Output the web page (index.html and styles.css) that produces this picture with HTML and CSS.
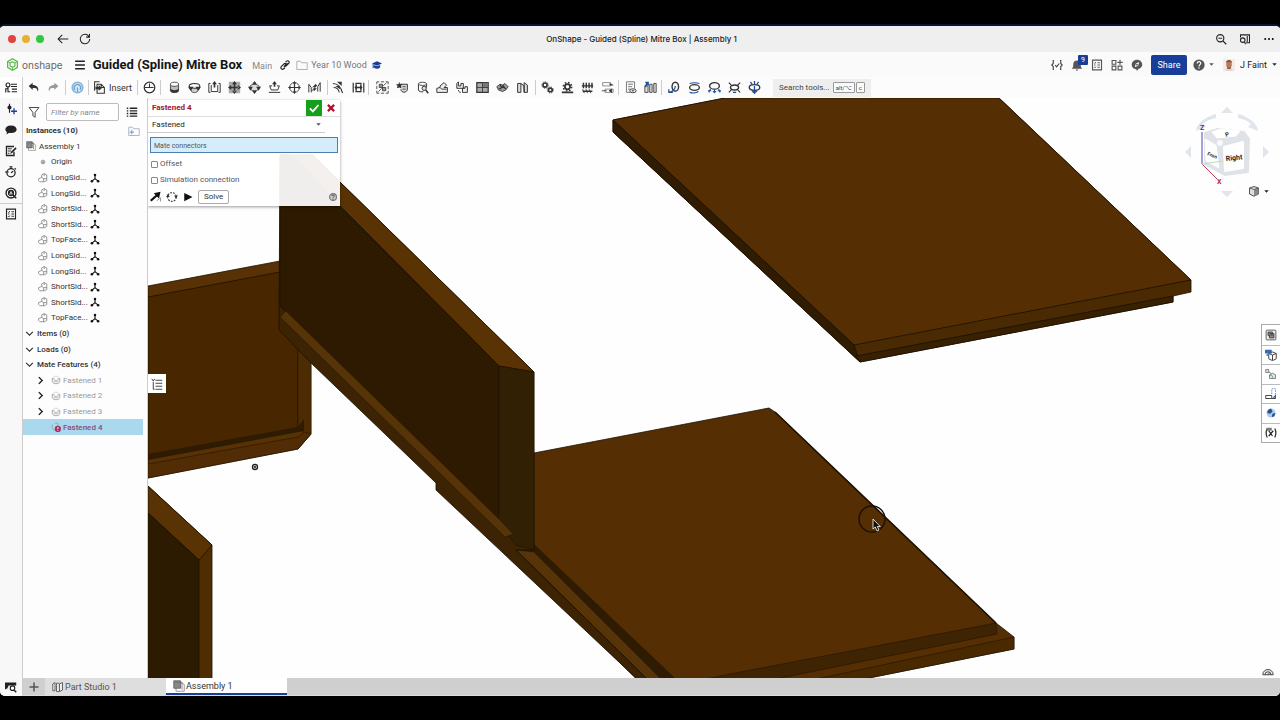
FILE: index.html
```html
<!DOCTYPE html>
<html lang="en">
<head>
<meta charset="utf-8">
<title>OnShape - Guided (Spline) Mitre Box | Assembly 1</title>
<link rel="stylesheet" href="styles.css">
</head>
<body>
<svg class="sprite" aria-hidden="true">
  <symbol id="i-tree" viewBox="0 0 16 16"><g fill="none" stroke="currentColor" stroke-width="1.500"><circle cx="4" cy="4" r="2.600"/><path d="M4 6.500V13h3M4 9H1v5M8 3h8M8 6h8M9 9.500h7M9 13h7"/></g></symbol>
  <symbol id="i-undo" viewBox="0 0 16 16"><path d="M2 6 7 2v3c5 0 7 3 7 6l-1 2c0-4-2-4.500-6-4.500V11z" fill="currentColor"/></symbol>
  <symbol id="i-redo" viewBox="0 0 16 16"><path d="M14 6 9 2v3C4 5 2 8 2 11l1 2c0-4 2-4.500 6-4.500V11z" fill="currentColor"/></symbol>
  <symbol id="i-sync" viewBox="0 0 16 16"><circle cx="8" cy="8" r="6.500" fill="#d6e8f6" stroke="#86b5db" stroke-width="2"/><path d="M5 11a4 4 0 1 1 6 0M8 8v6" fill="none" stroke="#6ba4d0" stroke-width="1.500"/></symbol>
  <symbol id="i-insert" viewBox="0 0 16 16"><g fill="none" stroke="currentColor" stroke-width="1.300"><path d="M5 4h5l4 4v7H5zM10 4v4h4M2 12V1h6"/></g><path d="M3 7h4V5l4 4-4 3v-2H3z" fill="currentColor"/></symbol>
  <symbol id="i-clock" viewBox="0 0 16 16"><circle cx="8" cy="8" r="6.500" fill="none" stroke="currentColor" stroke-width="1.500"/><path d="M8 3v5h5M2 8l6 0" fill="none" stroke="currentColor" stroke-width="1.300"/></symbol>
  <symbol id="i-cyl" viewBox="0 0 16 16"><path d="M3 4v8c0 3 10 3 10 0V4" fill="#bbb" stroke="currentColor"/><ellipse cx="8" cy="4" rx="5" ry="2.500" fill="#fff" stroke="currentColor"/><path d="M3 9c0 3 10 3 10 0v3c0 3-10 3-10 0z" fill="currentColor"/></symbol>
  <symbol id="i-revolve" viewBox="0 0 16 16"><path d="M4 8v4c0 3 8 3 8 0V8" fill="#ccc" stroke="currentColor"/><ellipse cx="8" cy="6" rx="6.500" ry="3" fill="#fff" stroke="currentColor" stroke-width="1.300"/><path d="M0 7h7L3 12zM16 7H9l4 5z" fill="currentColor"/></symbol>
  <symbol id="i-slider" viewBox="0 0 16 16"><path d="M4 5v8h8V5M3 3H1v11h2M13 3h2v11h-2" fill="none" stroke="currentColor" stroke-width="1.200"/><path d="M8 0l3 4H5zM7 4h2v4H7z" fill="currentColor"/></symbol>
  <symbol id="i-planar" viewBox="0 0 16 16"><path d="M1 1h14v14H1z" fill="#aaa"/><path d="M8 0l3 4H5zM8 16l3-4H5zM0 8l4-3v6zM16 8l-4-3v6zM7 3h2v10H7zM3 7h10v2H3z" fill="currentColor"/></symbol>
  <symbol id="i-cylmate" viewBox="0 0 16 16"><ellipse cx="8" cy="8" rx="6" ry="4" fill="#ddd" stroke="currentColor"/><path d="M8 0l3 4H5zM8 16l3-4H5zM0 7h6l-3 5zM16 7h-6l3 5z" fill="currentColor"/></symbol>
  <symbol id="i-pin" viewBox="0 0 16 16"><path d="M8 0l3 4H9v3H7V4H5z" fill="currentColor"/><path d="M5 6H2l2 5h8l2-5h-3M1 14h14" fill="none" stroke="currentColor" stroke-width="1.200"/></symbol>
  <symbol id="i-ball" viewBox="0 0 16 16"><circle cx="8" cy="8" r="6" fill="none" stroke="currentColor"/><path d="M8 1v14M1 8h14" stroke="currentColor" stroke-width="1.500"/><path d="M8 0l2 3H6zM8 16l2-3H6zM0 8l3-2v4zM16 8l-3-2v4z" fill="currentColor"/></symbol>
  <symbol id="i-parallel" viewBox="0 0 16 16"><path d="M1 14V4l3 4v6M15 13V2l-3 5v6M5 12l6-7" fill="none" stroke="currentColor" stroke-width="1.200"/><path d="M5 8l5-5v4zM11 9l-4 4V9z" fill="currentColor"/></symbol>
  <symbol id="i-tangent" viewBox="0 0 16 16"><path d="M1 3c6 0 10 4 12 12M2 8c4 0 6 2 7 6" fill="none" stroke="currentColor" stroke-width="1.300"/><path d="M6 1h6v5zM4 6h5l1 4z" fill="currentColor"/></symbol>
  <symbol id="i-width" viewBox="0 0 16 16"><path d="M1.500 2v12M14.500 2v12M5 3h6v10H5z" fill="none" stroke="currentColor" stroke-width="1.500"/><path d="M3 8l3-3v2h4V5l3 3-3 3V9H6v2z" fill="currentColor"/></symbol>
  <symbol id="i-group" viewBox="0 0 16 16"><path d="M1 4V1h3M12 1h3v3M15 12v3h-3M4 15H1v-3M6 1h4M6 15h4M1 6v4M15 6v4" fill="none" stroke="currentColor"/><path d="M4 4h4v4H4zM8 8h4v4H8z" fill="#999" stroke="currentColor"/><path d="M9 6l4-4M3 13l4-4" stroke="currentColor"/></symbol>
  <symbol id="i-rel" viewBox="0 0 16 16"><path d="M5 4h9v6c0 5-8 5-8 0" fill="#ddd" stroke="currentColor" stroke-width="1.200"/><path d="M8 7h4M8 10h4" stroke="currentColor"/><path d="M4 1l1 3 3 0-2 2 1 3-3-1-3 1 1-3-2-2h3z" fill="currentColor"/></symbol>
  <symbol id="i-search3d" viewBox="0 0 16 16"><path d="M3 3v8c0 2 4 3 6 2M13 3v5" fill="none" stroke="currentColor" stroke-width="1.200"/><ellipse cx="8" cy="3.500" rx="5" ry="2" fill="#fff" stroke="currentColor"/><circle cx="10" cy="9" r="2.600" fill="#ddd" stroke="currentColor" stroke-width="1.200"/><path d="M12 11l3 4" stroke="currentColor" stroke-width="2"/></symbol>
  <symbol id="i-pattern" viewBox="0 0 16 16"><path d="M1 13V9l4-1V6l5-4 3 3-3 3h4v6H1zM5 8l2 2h6" fill="#eee" stroke="currentColor" stroke-width="1.200"/></symbol>
  <symbol id="i-copy3d" viewBox="0 0 16 16"><path d="M1 9V3l2-2v5h3V3h3v6zM8 14V9h3V7h3v7z" fill="#eee" stroke="currentColor" stroke-width="1.200"/><path d="M3 11c0 2 1 3 3 3" fill="none" stroke="currentColor"/></symbol>
  <symbol id="i-quad" viewBox="0 0 16 16"><path d="M1 2h14v12H1z" fill="#aaa" stroke="currentColor" stroke-width="1.500"/><path d="M8 2h7v6H8z" fill="#777"/><path d="M1 8h14M8 2v12" stroke="currentColor"/></symbol>
  <symbol id="i-rep" viewBox="0 0 16 16"><path d="M1 7l4-3 3 1 3-2 4 4-3 4-4 2-5-2z" fill="#999" stroke="currentColor"/><path d="M5 4l2 5M8 5l4 5M4 10l6-4" stroke="currentColor" stroke-width="1.500"/></symbol>
  <symbol id="i-book" viewBox="0 0 16 16"><path d="M2 3h4v11H2zM10 2l4 3v9h-4zM6 3l4 3v8" fill="#ddd" stroke="currentColor" stroke-width="1.200"/></symbol>
  <symbol id="i-gears" viewBox="0 0 16 16"><g fill="none" stroke="currentColor"><circle cx="5" cy="5" r="2.500" stroke-width="2"/><circle cx="5" cy="5" r="4" stroke-dasharray="1.500 1.500"/><circle cx="11.500" cy="11" r="2.300" stroke-width="2"/><circle cx="11.500" cy="11" r="3.800" stroke-dasharray="1.500 1.500"/></g></symbol>
  <symbol id="i-gear" viewBox="0 0 16 16"><circle cx="8" cy="7" r="3.200" fill="none" stroke="currentColor" stroke-width="2.200"/><circle cx="8" cy="7" r="5.200" fill="none" stroke="currentColor" stroke-width="1.800" stroke-dasharray="2 2.080"/><path d="M1 14h14" stroke="currentColor" stroke-width="2"/></symbol>
  <symbol id="i-rack" viewBox="0 0 16 16"><path d="M1 6h14M3 2v7M6.500 2v7M10 2v7M13.500 2v7M2 12.500h12" stroke="currentColor" stroke-width="1.800"/><path d="M2 10l2 5M6 10l2 5M10 10l2 5" stroke="currentColor"/></symbol>
  <symbol id="i-linear" viewBox="0 0 16 16"><path d="M2 2h10v4H2zM5 10h10v4H5z" fill="#fff" stroke="#777"/><path d="M11 3v2h4M1 12h6M10 12l3-2v4z" stroke="currentColor" fill="currentColor"/></symbol>
  <symbol id="i-bom" viewBox="0 0 16 16"><path d="M3 1h10v8M3 1v13h5M5 4h6M5 7h5M5 10h3" fill="none" stroke="#777" stroke-width="1.200"/><ellipse cx="11" cy="12" rx="4" ry="2.500" fill="#ddd" stroke="currentColor"/><circle cx="11" cy="12" r="1" fill="currentColor"/></symbol>
  <symbol id="i-explode" viewBox="0 0 16 16"><path d="M1 6h4v8H1zM7 4h3v10H7zM12 3h3v11h-3z" fill="#ddd" stroke="currentColor"/><path d="M1 1h5v5L4.500 4.500 2 8 1 6l1.500-3z" fill="#1f4e9c"/></symbol>
  <symbol id="i-joint1" viewBox="0 0 16 16"><ellipse cx="9" cy="7" rx="4" ry="5.500" fill="none" stroke="currentColor" stroke-width="1.700"/><path d="M9 6c0 5-4 7-8 8M1 10v4h5" fill="none" stroke="#1f4e9c" stroke-width="1.500"/></symbol>
  <symbol id="i-joint2" viewBox="0 0 16 16"><ellipse cx="8" cy="8" rx="6" ry="3.500" fill="none" stroke="currentColor" stroke-width="1.700"/><path d="M2 3c4-1 8-1 12 0M2 14c4 1 8 1 11-1" fill="none" stroke="#1f4e9c" stroke-width="1.300"/></symbol>
  <symbol id="i-joint3" viewBox="0 0 16 16"><ellipse cx="8" cy="6" rx="6" ry="4" fill="none" stroke="currentColor" stroke-width="1.700"/><path d="M3 10l-2 4M8 10v5M13 10l2 4M0 12h4M12 12h4M6 13h4" stroke="#1f4e9c" stroke-width="1.400"/></symbol>
  <symbol id="i-joint4" viewBox="0 0 16 16"><ellipse cx="8" cy="8" rx="5" ry="3" fill="none" stroke="currentColor" stroke-width="1.700"/><path d="M1 2l4 4M15 2l-4 4M1 14l4-4M15 14l-4-4" stroke="currentColor" stroke-width="1.500"/><path d="M6 14h4" stroke="#1f4e9c" stroke-width="1.500"/></symbol>
  <symbol id="i-joint5" viewBox="0 0 16 16"><ellipse cx="8" cy="8" rx="6.500" ry="3.500" fill="none" stroke="currentColor" stroke-width="1.600"/><path d="M8 6v9M5 12l3 3 3-3M8 0v4M3 1l2 3M13 1l-2 3" fill="none" stroke="#1f4e9c" stroke-width="1.600"/></symbol>

  <symbol id="i-addslider" viewBox="0 0 16 16"><path d="M6 1v12" stroke="currentColor" stroke-width="1.500"/><circle cx="6" cy="6" r="2.700" fill="currentColor"/><path d="M12 7v8M8 11h8" stroke="#1a3f9c" stroke-width="1.800"/></symbol>
  <symbol id="i-chat" viewBox="0 0 16 16"><path d="M8 2c5 0 7.500 2.500 7.500 5.200S13 12 8 12c-1 0-2-.1-2.600-.3L2 14l.6-3.500C1 9.500.5 8.500.5 7.200.5 4.500 3 2 8 2z" fill="currentColor"/></symbol>
  <symbol id="i-note" viewBox="0 0 16 16"><path d="M12 9v5H2V2h10" fill="none" stroke="currentColor" stroke-width="1.800"/><path d="M4 5h5M4 8h4M4 11h2" stroke="currentColor" stroke-width="1.200"/><path d="M7 12l1-3 6-6 1.500 1.500-6 6z" fill="currentColor"/></symbol>
  <symbol id="i-watch" viewBox="0 0 16 16"><circle cx="8" cy="9" r="5.500" fill="none" stroke="currentColor" stroke-width="1.700"/><path d="M6 1h4M8 1v3M13 3l1.500 1.500M8 9l3-2M0 8h5" stroke="currentColor" stroke-width="1.600"/></symbol>
  <symbol id="i-q" viewBox="0 0 16 16"><circle cx="8" cy="8" r="6.600" fill="#fff" stroke="currentColor" stroke-width="1.800"/><circle cx="8" cy="8" r="4.200" fill="currentColor"/><path d="M8 5l2.500 5h-5z" fill="#fff"/><path d="M8 7.500v3" stroke="currentColor"/><path d="M10 10l5 5" stroke="currentColor" stroke-width="2"/></symbol>
  <symbol id="i-check" viewBox="0 0 16 16"><path d="M2 1.500h12v13H2z" fill="none" stroke="currentColor" stroke-width="1.500"/><path d="M4 5l1 1 1.500-2M4 11l1 1 1.500-2M8.500 5H12M8.500 8H12M8.500 11H12M4 8h2" fill="none" stroke="currentColor" stroke-width="1.200"/></symbol>
  <symbol id="i-tabsearch" viewBox="0 0 16 16"><path d="M1 11V3h13v3" fill="none" stroke="currentColor" stroke-width="2"/><path d="M1 3h13v3H1zM1 6h4l-2 4H1z" fill="currentColor"/><circle cx="10" cy="9.500" r="3" fill="#fff" stroke="currentColor" stroke-width="1.500"/><path d="M12 12l3 3" stroke="currentColor" stroke-width="2"/></symbol>

  <symbol id="i-part" viewBox="0 0 16 16"><path d="M1 9l5-2V3l4-2 4 2v9l-4 2H3l-2-2zM6 7l3 2h5M9 9v5M10 1v4" fill="#fff" stroke="#777" stroke-width="1.200"/></symbol>
  <symbol id="i-mate" viewBox="0 0 16 16"><path d="M8 2v7L3 13M8 9l5 4" fill="none" stroke="#111" stroke-width="1.800"/><circle cx="8" cy="3" r="2" fill="#111"/><circle cx="3" cy="13" r="2" fill="#111"/><circle cx="13" cy="13" r="2" fill="#111"/></symbol>
  <symbol id="i-assembly" viewBox="0 0 16 16"><path d="M4 4h8l3 2v9H4z" fill="#fff" stroke="#777"/><path d="M1 1h9v10H1z" fill="#888" stroke="#555"/><path d="M3 3h9v10" fill="none" stroke="#666"/></symbol>
  <symbol id="i-fasten" viewBox="0 0 16 16"><path d="M2 5v6c2 4 10 4 12 0V5l-4 2v3H6V7z" fill="#eee" stroke="#999" stroke-width="1.200"/><path d="M5 2h6v6H5z" fill="#fff" stroke="#ccc"/></symbol>
  <symbol id="i-down" viewBox="0 0 16 16"><path d="M2 5l6 6 6-6" fill="none" stroke="currentColor" stroke-width="2"/></symbol>
  <symbol id="i-right" viewBox="0 0 16 16"><path d="M5 2l6 6-6 6" fill="none" stroke="currentColor" stroke-width="2.500"/></symbol>
  <symbol id="i-folder" viewBox="0 0 16 16"><path d="M1 3h5l1.500 2H15v9H1z" fill="none" stroke="#aaa" stroke-width="1.200"/></symbol>
  <symbol id="i-caret" viewBox="0 0 16 16"><path d="M1 4h14l-7 8z" fill="currentColor"/></symbol>
</svg>

<div class="window">
  <header class="titlebar">
    <div class="title-nav">
      <div class="lights"><i class="light light--red"></i><i class="light light--amber"></i><i class="light light--green"></i></div>
      <button class="icon-btn" aria-label="Back"><svg class="ic" viewBox="0 0 16 16"><path d="M15 8H2M7 2.500L1.500 8 7 13.500" fill="none" stroke="#222" stroke-width="1.400"/></svg></button>
      <button class="icon-btn" aria-label="Reload"><svg class="ic" viewBox="0 0 16 16"><path d="M13.500 5A6.300 6.300 0 1 0 14.300 8M14 1v4.500H9.500" fill="none" stroke="#222" stroke-width="1.400"/></svg></button>
    </div>
    <div class="window-title">OnShape - Guided (Spline) Mitre Box | Assembly 1</div>
    <div class="title-actions">
      <button class="icon-btn" aria-label="Zoom out"><svg class="ic" viewBox="0 0 16 16"><circle cx="7" cy="7" r="4.800" fill="none" stroke="#222" stroke-width="1.500"/><path d="M10.500 10.500L15 15M4.500 7h5" stroke="#222" stroke-width="1.600"/></svg></button>
      <button class="icon-btn" aria-label="Search page"><svg class="ic" viewBox="0 0 16 16"><path d="M2 6V2.500h12V13H9M11 4v8" fill="none" stroke="#222" stroke-width="1.400"/><circle cx="5" cy="9.500" r="3" fill="none" stroke="#222" stroke-width="1.400"/><path d="M7 12l2 3" stroke="#222" stroke-width="1.400"/></svg></button>
      <button class="icon-btn" aria-label="More"><svg class="ic" viewBox="0 0 16 16"><circle cx="3" cy="8" r="1.300"/><circle cx="8" cy="8" r="1.300"/><circle cx="13" cy="8" r="1.300"/></svg></button>
    </div>
  </header>

  <div class="docbar">
    <a class="brand" href="#"><svg class="brand-mark" viewBox="0 0 16 16"><path d="M8 1l6 3.500v7L8 15l-6-3.500v-7z" fill="none" stroke="#58b947" stroke-width="1.600"/><path d="M8 4.500l3 1.700v3.600l-3 1.700-3-1.700V6.200z" fill="none" stroke="#58b947" stroke-width="1.400"/><path d="M11 6l3-1.500M8 11.500V15M5 6L2 4.500" stroke="#58b947"/></svg><span>onshape</span></a>
    <button class="icon-btn menu-btn" aria-label="Menu"><svg class="ic" viewBox="0 0 16 16"><path d="M1.500 3h13M1.500 8h13M1.500 13h13" stroke="#222" stroke-width="2.200"/></svg></button>
    <h1 class="doc-title">Guided (Spline) Mitre Box</h1>
    <span class="branch">Main</span>
    <svg class="ic-sm link-ic" viewBox="0 0 16 16"><path d="M7 10l5-5M9 3.500l2-2c2-1 5 1 3 4l-4 4c-1 1-3 1-4 0M8 12l-2 2c-2 2-6 0-4-3.500l4-4c1-1 3-1 4 0" fill="none" stroke="#222" stroke-width="1.800"/></svg>
    <a class="folder-link" href="#"><svg class="ic"><use href="#i-folder"/></svg><span>Year 10 Wood</span></a>
    <svg class="ic-sm" viewBox="0 0 16 16"><path d="M8 2l8 3.500L8 9 0 5.500z" fill="#173f98"/><path d="M3 8l5 2 5-2v4c-3 2.500-7 2.500-10 0zM1 6h1.500v7H1z" fill="#173f98"/></svg>
    <div class="doc-actions">
      <button class="act" aria-label="Variables"><svg class="ic" viewBox="0 0 16 16"><path d="M4 2H3v4L1 8l2 2v4h1M12 2h1v4l2 2-2 2v4h-1M5.500 8l2 2.500L11 6" fill="none" stroke="#444" stroke-width="1.500"/></svg></button>
      <button class="act act--bell" aria-label="Notifications"><svg class="ic" viewBox="0 0 16 16"><path d="M1 13c2-2 2-3 2-6 0-3 2-5 5-5s5 2 5 5c0 3 0 4 2 6zM6 14h4l-2 2z" fill="#555"/></svg><span class="badge">9</span></button>
      <button class="act" aria-label="Tasks"><svg class="ic"><use href="#i-check"/></svg></button>
      <button class="act" aria-label="Apps"><svg class="ic" viewBox="0 0 16 16"><path d="M1.500 2h5v5h-5zM1.500 9.500h5v5h-5zM9.500 9.500h5v5h-5zM12 1v7M8.500 4.500h7" fill="none" stroke="#555" stroke-width="1.500"/></svg></button>
      <button class="act" aria-label="AI advisor"><svg class="ic" viewBox="0 0 16 16"><path d="M8 1c4 0 7 3 7 6.500 0 3-3 5-5 5.500l-2 3-1-2.500C3 13 1 11 1 7.500 1 4 4 1 8 1z" fill="#555"/><path d="M11 4L9.500 9 5 11l1.500-5z" fill="#fff"/><circle cx="8" cy="7.500" r="1.200" fill="#555"/></svg></button>
      <button class="share">Share</button>
      <button class="act act--help" aria-label="Help"><svg class="ic" viewBox="0 0 16 16"><circle cx="8" cy="8" r="7.500" fill="#555"/><path d="M5.700 6c0-3.500 5-3 4.600 0C10 7.500 8 8 8 10" fill="none" stroke="#fff" stroke-width="1.600"/><circle cx="8" cy="12" r="1" fill="#fff"/></svg><svg class="caret"><use href="#i-caret"/></svg></button>
      <button class="user"><svg class="avatar" viewBox="0 0 16 16"><rect width="16" height="16" fill="#f3ebe6"/><path d="M3 16c0-4 2-5 5-5s5 1 5 5z" fill="#e7d5cf"/><ellipse cx="8" cy="7" rx="3.700" ry="5" fill="#b9785a"/><path d="M4 5c0-5 8-5 8 0-2-2-6-2-8 0z" fill="#7a4c36"/><path d="M5 9c1 4 5 4 6 0l-1 4H6z" fill="#4c2d22"/></svg><span>J Faint</span><svg class="caret"><use href="#i-caret"/></svg></button>
    </div>
  </div>

  <div class="workspace">
    <nav class="rail">
      <button class="rail-btn rail-btn--top" aria-label="Feature list"><svg class="ic"><use href="#i-tree"/></svg></button>
      <button class="rail-btn" aria-label="Configurations"><svg class="ic"><use href="#i-addslider"/></svg></button>
      <button class="rail-btn" aria-label="Comments"><svg class="ic"><use href="#i-chat"/></svg></button>
      <button class="rail-btn" aria-label="Notes"><svg class="ic"><use href="#i-note"/></svg></button>
      <button class="rail-btn" aria-label="History"><svg class="ic"><use href="#i-watch"/></svg></button>
      <button class="rail-btn" aria-label="Learning"><svg class="ic"><use href="#i-q"/></svg></button>
      <button class="rail-btn rail-btn--split" aria-label="Checklist"><svg class="ic"><use href="#i-check"/></svg></button>
      <button class="rail-btn rail-btn--bottom" aria-label="Tab manager"><svg class="ic"><use href="#i-tabsearch"/></svg></button>
    </nav>

    <div class="content">
      <div class="toolbar">
        <div class="tools tools--first"><button class="tool" aria-label="Undo"><svg><use href="#i-undo"/></svg></button><button class="tool tool--off" aria-label="Redo"><svg><use href="#i-redo"/></svg></button></div>
        <div class="tools"><button class="tool" aria-label="Update"><svg><use href="#i-sync"/></svg></button></div>
        <div class="tools"><button class="tool tool--text"><svg><use href="#i-insert"/></svg><span>Insert</span></button></div>
        <div class="tools"><button class="tool" aria-label="Named positions"><svg><use href="#i-clock"/></svg></button></div>
        <div class="tools tools--wide">
          <button class="tool" aria-label="Fastened mate"><svg><use href="#i-cyl"/></svg></button>
          <button class="tool" aria-label="Revolute mate"><svg><use href="#i-revolve"/></svg></button>
          <button class="tool" aria-label="Slider mate"><svg><use href="#i-slider"/></svg></button>
          <button class="tool" aria-label="Planar mate"><svg><use href="#i-planar"/></svg></button>
          <button class="tool" aria-label="Cylindrical mate"><svg><use href="#i-cylmate"/></svg></button>
          <button class="tool" aria-label="Pin slot mate"><svg><use href="#i-pin"/></svg></button>
          <button class="tool" aria-label="Ball mate"><svg><use href="#i-ball"/></svg></button>
          <button class="tool" aria-label="Parallel mate"><svg><use href="#i-parallel"/></svg></button>
        </div>
        <div class="tools tools--tight"><button class="tool" aria-label="Tangent mate"><svg><use href="#i-tangent"/></svg></button><button class="tool" aria-label="Width mate"><svg><use href="#i-width"/></svg></button></div>
        <div class="tools tools--wide">
          <button class="tool" aria-label="Group"><svg><use href="#i-group"/></svg></button>
          <button class="tool" aria-label="Mate connector"><svg><use href="#i-rel"/></svg></button>
          <button class="tool" aria-label="Snap mode"><svg><use href="#i-search3d"/></svg></button>
          <button class="tool" aria-label="Replicate"><svg><use href="#i-pattern"/></svg></button>
          <button class="tool" aria-label="Copy"><svg><use href="#i-copy3d"/></svg></button>
          <button class="tool" aria-label="Linear pattern"><svg><use href="#i-quad"/></svg></button>
          <button class="tool" aria-label="Circular pattern"><svg><use href="#i-rep"/></svg></button>
          <button class="tool" aria-label="Standard content"><svg><use href="#i-book"/></svg></button>
        </div>
        <div class="tools"><button class="tool" aria-label="Gear relation"><svg><use href="#i-gears"/></svg></button><button class="tool" aria-label="Rack relation"><svg><use href="#i-gear"/></svg></button><button class="tool" aria-label="Screw relation"><svg><use href="#i-rack"/></svg></button><button class="tool" aria-label="Linear relation"><svg><use href="#i-linear"/></svg></button></div>
        <div class="tools"><button class="tool" aria-label="Display states"><svg><use href="#i-bom"/></svg></button><button class="tool" aria-label="Exploded view"><svg><use href="#i-explode"/></svg></button></div>
        <div class="tools tools--last"><button class="tool" aria-label="Force"><svg><use href="#i-joint1"/></svg></button><button class="tool" aria-label="Moment"><svg><use href="#i-joint2"/></svg></button><button class="tool" aria-label="Pressure"><svg><use href="#i-joint3"/></svg></button><button class="tool" aria-label="Fixed"><svg><use href="#i-joint4"/></svg></button><button class="tool" aria-label="Bearing load"><svg><use href="#i-joint5"/></svg></button></div>
        <button class="tool-search"><span>Search tools...</span><span class="keys"><kbd>alt/⌥</kbd><kbd>c</kbd></span></button>
      </div>

      <main class="main">
        <aside class="sidebar">
          <div class="filter">
            <svg class="ic filter-ic" viewBox="0 0 16 16"><path d="M1.500 2h13L9.500 8.500V15l-3-2V8.500z" fill="none" stroke="#444" stroke-width="1.300"/></svg>
            <input class="filter-input" type="text" placeholder="Filter by name" aria-label="Filter by name">
            <button class="icon-btn filter-list" aria-label="List options"><svg class="ic" viewBox="0 0 16 16"><path d="M5 3h10M5 6.500h10M5 10h10M5 13.500h10M1 3h2M1 6.500h2M1 10h2M1 13.500h2" stroke="#222" stroke-width="1.800"/></svg></button>
          </div>
          <ul class="tree">
            <li class="row row--head"><span>Instances (10)</span><svg class="ic new-folder" viewBox="0 0 16 16"><path d="M1 3h5l1.500 2H15v9H1z" fill="none" stroke="#9fb0c4" stroke-width="1.200"/><path d="M5 6.500v6M2 9.500h6" stroke="#6b8fc0" stroke-width="1.200"/></svg></li>
            <li class="row row--root"><svg class="ic-sm"><use href="#i-assembly"/></svg><span>Assembly 1</span></li>
            <li class="row row--part"><svg class="ic-sm" viewBox="0 0 16 16"><circle cx="8" cy="8" r="3" fill="#ccc" stroke="#777"/><circle cx="8" cy="8" r="1" fill="#555"/></svg><span>Origin</span></li>
            <li class="row row--part"><svg class="ic-sm"><use href="#i-part"/></svg><span class="name">LongSid...</span><svg class="ic-sm"><use href="#i-mate"/></svg></li>
            <li class="row row--part"><svg class="ic-sm"><use href="#i-part"/></svg><span class="name">LongSid...</span><svg class="ic-sm"><use href="#i-mate"/></svg></li>
            <li class="row row--part"><svg class="ic-sm"><use href="#i-part"/></svg><span class="name">ShortSid...</span><svg class="ic-sm"><use href="#i-mate"/></svg></li>
            <li class="row row--part"><svg class="ic-sm"><use href="#i-part"/></svg><span class="name">ShortSid...</span><svg class="ic-sm"><use href="#i-mate"/></svg></li>
            <li class="row row--part"><svg class="ic-sm"><use href="#i-part"/></svg><span class="name">TopFace...</span><svg class="ic-sm"><use href="#i-mate"/></svg></li>
            <li class="row row--part"><svg class="ic-sm"><use href="#i-part"/></svg><span class="name">LongSid...</span><svg class="ic-sm"><use href="#i-mate"/></svg></li>
            <li class="row row--part"><svg class="ic-sm"><use href="#i-part"/></svg><span class="name">LongSid...</span><svg class="ic-sm"><use href="#i-mate"/></svg></li>
            <li class="row row--part"><svg class="ic-sm"><use href="#i-part"/></svg><span class="name">ShortSid...</span><svg class="ic-sm"><use href="#i-mate"/></svg></li>
            <li class="row row--part"><svg class="ic-sm"><use href="#i-part"/></svg><span class="name">ShortSid...</span><svg class="ic-sm"><use href="#i-mate"/></svg></li>
            <li class="row row--part"><svg class="ic-sm"><use href="#i-part"/></svg><span class="name">TopFace...</span><svg class="ic-sm"><use href="#i-mate"/></svg></li>
            <li class="row row--group"><svg class="chev"><use href="#i-down"/></svg><span>Items (0)</span></li>
            <li class="row row--group"><svg class="chev"><use href="#i-down"/></svg><span>Loads (0)</span></li>
            <li class="row row--group"><svg class="chev"><use href="#i-down"/></svg><span>Mate Features (4)</span></li>
            <li class="row row--mate"><svg class="chev"><use href="#i-right"/></svg><svg class="ic-sm"><use href="#i-fasten"/></svg><span>Fastened 1</span></li>
            <li class="row row--mate"><svg class="chev"><use href="#i-right"/></svg><svg class="ic-sm"><use href="#i-fasten"/></svg><span>Fastened 2</span></li>
            <li class="row row--mate"><svg class="chev"><use href="#i-right"/></svg><svg class="ic-sm"><use href="#i-fasten"/></svg><span>Fastened 3</span></li>
            <li class="row row--mate row--active"><span class="chev"></span><svg class="ic-sm" viewBox="0 0 16 16"><path d="M2 4v6c1 2 3 3 6 3M6 2h5v5" fill="none" stroke="#7fa3b8" stroke-width="1.200"/><circle cx="11" cy="11" r="5" fill="#a83265"/><path d="M11 8v3.500M11 13v1" stroke="#fff" stroke-width="1.500"/></svg><span>Fastened 4</span></li>
          </ul>
        </aside>

        <section class="viewport">
          <svg class="scene" viewBox="147 98 1133 580" preserveAspectRatio="xMinYMin slice" role="img" aria-label="Mitre box assembly">
            <g stroke="#1c1000" stroke-width=".8" stroke-linejoin="round">
              <path d="M612 120L724 98H998L1190 280V292L1172 296V302L859 362L612 132Z" fill="#4a2a03"/>
              <path d="M612 120L724 98H998L1190 280L853 345Z" fill="#552f03"/>
              <path d="M612 120L853 345L859 362L612 132Z" fill="#301c02"/>
              <path d="M855 356L1172 296V302L859 362Z" fill="#382003"/>

              <path d="M147 286L279 261L310 300V434L297 449L147 478Z" fill="#583205"/>
              <path d="M147 297L279 272L297 300V430L147 457Z" fill="#482700"/>
              <path d="M297 340H310V434L297 449L303 432L297 428Z" fill="#4d2c04" stroke-width=".4"/>
              <path d="M147 454L297 427L303 419V431L147 460Z" fill="#2e1b02" stroke="none"/>
              <path d="M147 464L297 437L303 432L310 434L297 449L147 478Z" fill="#512c04" stroke-width=".5"/>

              <path d="M147 486L211 545V679H147Z" fill="#4f2d03"/>
              <path d="M147 486L211 545L198 560L147 513Z" fill="#5a3304"/>
              <path d="M147 513L198 560V679H147Z" fill="#2c1b00"/>

              <path d="M533 453L768 408L774 412L995 623L1013 637V649L863 679H637L520 550Z" fill="#552f03"/>
              <path d="M724 675L995 623L996 634L775 679H705Z" fill="#3e2403" stroke-width=".5"/>
              <path d="M815 679L1013 637V649L863 679Z" fill="#482900" stroke-width=".5"/>
              <path d="M774 412L995 623" fill="none" stroke-width="1.600"/>
              <path d="M533 544L675 679H635L500 545Z" fill="#2e1b02" stroke="none"/>
              <path d="M515 550L533 552L660 679H646Z" fill="#573407" stroke-width=".4"/>

              <path d="M279 155H312L340 183L533 372V550L515 550L646 679H636L435 490V483L310 363L278 330Z" fill="#3b2304"/>
              <path d="M279 155H312L340 183L533 372L498 366L340 207L292 155Z" fill="#5a3304"/>
              <path d="M279 155H292L340 207L498 366V520L505 530L279 306Z" fill="#2d1a01"/>
              <path d="M498 366L533 372V550L515 545L498 525Z" fill="#312003" stroke-width=".5"/>
              <path d="M279 317L285 311L500 521L512 534L504 537Z" fill="#563407" stroke-width=".4"/>
            </g>
            <circle cx="254" cy="467" r="2.600" fill="#bbb" stroke="#222" stroke-width="1.200"/><circle cx="254" cy="467" r="1" fill="#222"/>
            <circle cx="871" cy="519" r="13" fill="none" stroke="#1b1008" stroke-width="1.400"/>
            <path d="M872 519v10l2.300-2 1.700 4 2-1-1.700-3.500h3z" fill="#111" stroke="#fff" stroke-width=".8"/>
          </svg>

          <form class="dialog">
            <div class="dialog-head"><h2>Fastened 4</h2><button type="button" class="ok" aria-label="Accept"><svg class="ic" viewBox="0 0 16 16"><path d="M2.500 8.500L6.500 12.500 14 4" fill="none" stroke="#fff" stroke-width="2.400"/></svg></button><button type="button" class="cancel" aria-label="Cancel"><svg class="ic-sm" viewBox="0 0 16 16"><path d="M3 3l10 10M13 3L3 13" stroke="#b0102c" stroke-width="3.500"/></svg></button></div>
            <div class="type"><select aria-label="Mate type"><option>Fastened</option></select><svg class="caret"><use href="#i-caret"/></svg></div>
            <input class="mates" type="text" placeholder="Mate connectors" aria-label="Mate connectors">
            <label class="check"><input type="checkbox"><span>Offset</span></label>
            <label class="check"><input type="checkbox"><span>Simulation connection</span></label>
            <div class="dialog-foot">
              <button type="button" class="icon-btn" aria-label="Flip axis"><svg class="ic" viewBox="0 0 16 16"><path d="M14 1L12 10 5 3z" fill="#111"/><path d="M1 13l9-8" stroke="#111" stroke-width="3"/><path d="M9 13l5-4v5" fill="none" stroke="#777"/></svg></button>
              <button type="button" class="icon-btn" aria-label="Rotate"><svg class="ic" viewBox="0 0 16 16"><circle cx="8" cy="8" r="5.800" fill="none" stroke="#444" stroke-width="1.500" stroke-dasharray="2.500 1.500"/><path d="M0 8h5L2.500 4zM11 6h5l-3 4z" fill="#333"/></svg></button>
              <button type="button" class="icon-btn" aria-label="Play"><svg class="ic" viewBox="0 0 16 16"><path d="M3 2.500L14 8 3 13.500z" fill="#111"/></svg></button>
              <button type="button" class="solve">Solve</button>
              <svg class="ic-sm info" viewBox="0 0 16 16"><circle cx="8" cy="8" r="5.500" fill="#ccc" stroke="#777" stroke-width="1.800"/><path d="M6 6.500c0-2.500 4-2.500 4 0C10 8 8 8 8 10M8 11v1.500" fill="none" stroke="#444" stroke-width="1.500"/></svg>
            </div>
          </form>

          <button class="list-toggle" aria-label="Toggle list"><svg class="ic" viewBox="0 0 16 16"><path d="M6 3h9M6 7h9M6 11h9M6 15h9M3 5v10h2M1 1l2 3 2-3" fill="none" stroke="#333" stroke-width="1.200"/></svg></button>

          <div class="viewcube">
            <svg class="cube" viewBox="0 0 88 96" role="img" aria-label="View cube">
              <g fill="#dfe5ea"><path d="M38 9h12l-6-6zM38 87h12l-6 6zM8 42v12l-6-6zM80 42v12l6-6z"/><path d="M14 23C18 16 25 12 33 10v4C27 15 23 17 20 20l3 3-10 4zM74 23C70 16 63 12 55 10v4c6 1 10 3 13 6l-3 3 10 4z"/></g>
              <path d="M22 29L35 25 61 28 66 35 65 68 42 71 22 60Z" fill="#dfe3e8" stroke="#dfe3e8" stroke-width="2" stroke-linejoin="round"/>
              <path d="M29 28L38 25 57 27 53 32 34 34Z" fill="#fff" stroke="#fff" stroke-linejoin="round"/>
              <path d="M22 35L33 41 36 64 23 57Z" fill="#fcfdfe" stroke="#fcfdfe" stroke-linejoin="round"/>
              <path d="M41 43L60 38V64L42 67Z" fill="#fff" stroke="#fff" stroke-width="2" stroke-linejoin="round"/>
              <circle cx="37" cy="39" r="3" fill="#f7f8fa"/>
              <path d="M19 28V60" stroke="#5543b4"/><path d="M19 60L34 75" stroke="#c0415c"/><path d="M19 60L40 57" stroke="#b9e0b5"/>
              <text x="17" y="26" font-size="7" font-weight="700" fill="#3b2fb0">Z</text>
              <text x="34" y="80" font-size="7" font-weight="700" fill="#c01838">X</text>
              <text x="43" y="57" font-size="7" font-weight="700" fill="#222" transform="rotate(-6 43 57)">Right</text>
              <text x="24" y="51" font-size="5" font-weight="700" fill="#333" transform="rotate(22 24 51)">Fron</text>
              <text x="43" y="33" font-size="6" font-weight="700" fill="#333" transform="rotate(-20 43 33)">P</text>
            </svg>
            <button class="shade" aria-label="Shading"><svg class="ic" viewBox="0 0 16 16"><path d="M2 4l6-2 6 2v8l-6 3-6-3z" fill="#ddd" stroke="#444" stroke-width="1.200"/><path d="M8 6l6-2v8l-6 3z" fill="#888"/><path d="M2 4l6 2 6-2" fill="none" stroke="#444"/></svg><svg class="caret"><use href="#i-caret"/></svg></button>
          </div>

          <div class="panel-tabs">
            <button aria-label="Bill of materials"><svg class="ic" viewBox="0 0 16 16"><rect x="1.500" y="1.500" width="13" height="13" rx="1" fill="#eee" stroke="#555" stroke-width="1.200"/><path d="M4 4h6v2h2v6H6V9H4zM6 6h4M6 8h5" fill="#888" stroke="#333"/></svg></button>
            <button aria-label="Configuration"><svg class="ic" viewBox="0 0 16 16"><path d="M5 6l5-2 5 2v7l-5 2.500L5 13zM5 6l5 2 5-2M10 8v7" fill="#fff" stroke="#333" stroke-width="1.200"/><path d="M0 1h9v5H0zM2 7h3v2H2z" fill="#3568b5"/></svg></button>
            <button aria-label="Named views"><svg class="ic" viewBox="0 0 16 16"><path d="M1 2h4v4H1zM5 5l4 3M6 9l4-2 4 2v5H6z" fill="#dfe8e2" stroke="#6a7f75" stroke-width="1.200"/><circle cx="8" cy="12" r="2" fill="#fff" stroke="#6a7f75"/></svg></button>
            <button aria-label="Sheet metal"><svg class="ic" viewBox="0 0 16 16"><path d="M1 10h8v4H1zM9 14h5V9" fill="#fff" stroke="#333" stroke-width="1.200"/><path d="M9 8V1h5v8" fill="none" stroke="#3568b5" stroke-dasharray="2 1.500"/><path d="M10 13l4-4v4z" fill="#3568b5"/></svg></button>
            <button aria-label="Appearance"><svg class="ic" viewBox="0 0 16 16"><circle cx="8" cy="8" r="6" fill="#a9cbe8"/><path d="M8 2l2 4-3 3-4-1 1-4zM10 9l4-1-2 5-3 0z" fill="#234f8d"/></svg></button>
            <button aria-label="Variables"><svg class="ic" viewBox="0 0 16 16"><path d="M3 2C1 6 1 10 3 14M13 2c2 4 2 8 0 12M5 5l5 7M11 5l-6 7" fill="none" stroke="#222" stroke-width="1.600"/><path d="M2 1h7v4H2z" fill="#777"/></svg></button>
          </div>
          <svg class="ic gauge" viewBox="0 0 16 16"><path d="M1 13a7 7 0 0 1 14 0zM4 13a4 4 0 0 1 8 0M8 13l2-3" fill="#eee" stroke="#444" stroke-width="1.300"/></svg>
        </section>
      </main>

      <footer class="tabs">
        <button class="tab-add" aria-label="Add tab"><svg class="ic" viewBox="0 0 16 16"><path d="M8 2v12M2 8h12" stroke="#555" stroke-width="2"/></svg></button>
        <button class="tab"><svg class="ic" viewBox="0 0 16 16"><path d="M1 4l3-2v11H1zM6 6V3h4M10 4l4-2v10l-4 2zM6 6v8h4" fill="#eee" stroke="#555" stroke-width="1.200"/></svg><span>Part Studio 1</span></button>
        <button class="tab tab--active"><svg class="ic"><use href="#i-assembly"/></svg><span>Assembly 1</span></button>
      </footer>
    </div>
  </div>
</div>
</body>
</html>
```
FILE: styles.css
```css
* { box-sizing: border-box; }

body {
  margin: 0;
  height: 100vh;
  padding: 24px 0;
  background: #000;
  color: #222;
  font-family: Roboto, "Liberation Sans", sans-serif;
  font-size: 8px;
  line-height: 12px;
}

button, input, select {
  margin: 0;
  padding: 0;
  border: 0;
  background: none;
  color: inherit;
  font: inherit;
}

a { color: inherit; text-decoration: none; }

svg { display: block; flex: none; }

.sprite { position: absolute; width: 0; height: 0; }

.ic { width: 12px; height: 12px; }
.ic-sm { width: 10px; height: 10px; }
.caret { width: 5px; height: 5px; }
.chev { width: 9px; height: 9px; flex: none; }
.icon-btn { display: grid; place-items: center; }

.window {
  display: flex;
  flex-direction: column;
  height: 100%;
  overflow: hidden;
  border-top: 2px solid #081631;
  border-radius: 5px;
  background: #fdfdfd;
}

/* Browser title bar */
.titlebar {
  display: grid;
  grid-template-columns: 1fr auto 1fr;
  flex: none;
  align-items: center;
  height: 26px;
  padding: 0 5px 0 8px;
  background: #efefef;
}
.title-nav { display: flex; align-items: center; gap: 10px; }
.lights { display: flex; gap: 6px; margin-right: 3px; }
.light { width: 8px; height: 8px; border-radius: 50%; }
.light--red { background: #e0443e; }
.light--amber { background: #e6b030; }
.light--green { background: #2fc640; }
.window-title {
  color: #1b1b1b;
  font-family: Inter, "Liberation Sans", sans-serif;
  font-weight: 500;
}
.title-actions { display: flex; justify-content: flex-end; gap: 12px; }

/* Document bar */
.docbar {
  display: flex;
  flex: none;
  align-items: center;
  height: 25px;
  padding: 0 3px 0 6px;
  background: #fafafa;
}
.brand {
  display: flex;
  align-items: center;
  gap: 3px;
  color: #666;
  font-family: Inter, sans-serif;
  font-size: 10px;
}
.brand-mark { width: 13px; height: 13px; }
.menu-btn { margin: 0 7px 0 11px; }
.doc-title {
  margin: 0;
  color: #151515;
  font-size: 13px;
  font-weight: 700;
  line-height: 20px;
}
.branch { margin: 2px 8px 0 10px; color: #888; font-size: 9px; }
.link-ic { margin-right: 6px; }
.folder-link {
  display: flex;
  align-items: center;
  gap: 3px;
  margin-right: 5px;
  color: #777;
  font-size: 9px;
}
.doc-actions { display: flex; align-items: center; margin-left: auto; }
.act { position: relative; display: grid; place-items: center; width: 20px; height: 20px; color: #555; }
.badge {
  position: absolute;
  top: 0;
  right: -1px;
  width: 10px;
  height: 10px;
  border-radius: 1px;
  background: #173f98;
  color: #fff;
  font-size: 7px;
  line-height: 10px;
}
.share {
  width: 36px;
  height: 20px;
  margin: 0 6px 0 4px;
  border-radius: 2px;
  background: #173f98;
  color: #fff;
  font-size: 9px;
}
.act--help { display: flex; align-items: center; gap: 4px; width: 22px; margin-right: 8px; }
.user { display: flex; align-items: center; gap: 5px; font-size: 9px; }
.avatar { width: 12px; height: 14px; }

/* Left icon rail */
.workspace { display: flex; flex: 1; min-height: 0; }
.rail {
  display: flex;
  flex: none;
  flex-direction: column;
  width: 23px;
  border-right: 1px solid #ccc;
  background: #f8f8f8;
}
.rail-btn { display: grid; place-items: center; flex: none; height: 21px; color: #222; }
.rail-btn--top { background: #fff; }
.rail-btn--split { border-top: 1px solid #ccc; }
.rail-btn--bottom { height: 18px; margin-top: auto; }

.content { display: flex; flex: 1; flex-direction: column; min-width: 0; }

/* Toolbar */
.toolbar { display: flex; flex: none; align-items: center; height: 21px; background: #fcfcfc; color: #333; }
.tools { display: flex; align-items: center; height: 15px; padding: 0 1px; border-right: 1px solid #ccc; }
.tools--first { padding: 0 2px 0 0; }
.tools--wide { padding: 0 3px; }
.tools--tight { padding: 0; }
.tools--last { padding: 0 2px; border-right: 0; }
.tool { display: grid; place-items: center; width: 20px; height: 15px; }
.tool svg { width: 13px; height: 13px; }
.tool--off { color: #999; }
.tool--text { display: flex; align-items: center; gap: 3px; width: auto; padding: 0 4px 0 3px; font-size: 9px; }
.tool-search {
  display: flex;
  align-items: center;
  gap: 3px;
  height: 18px;
  margin-left: 7px;
  padding: 0 6px;
  background: #eee;
  color: #444;
}
.keys { display: flex; gap: 1px; }
kbd {
  padding: 0 2px;
  border: 1px solid #999;
  border-radius: 1px;
  background: #fafafa;
  font-family: Roboto, "DejaVu Sans", sans-serif;
  font-size: 6px;
  line-height: 9px;
}

/* Instance list */
.main { display: flex; flex: 1; min-height: 0; }
.sidebar { flex: none; width: 125px; border-right: 1px solid #ccc; background: #fdfdfd; }
.filter { display: flex; align-items: center; height: 25px; padding: 3px 9px 0 5px; }
.filter-input {
  flex: 1;
  min-width: 0;
  height: 18px;
  margin: 0 7px 0 6px;
  padding: 0 4px;
  border: 1px solid #bbb;
  border-radius: 2px;
  background: #fff;
}
.filter-input::placeholder { color: #888; font-style: italic; opacity: 1; }
.tree { display: grid; min-height: 312px; margin: 0; padding: 0; list-style: none; }
.row { display: flex; align-items: center; gap: 3px; margin-right: 4px; line-height: 15px; color: #333; }
.row--head { padding: 0 3px; font-weight: 700; }
.new-folder { margin-left: auto; }
.row--root { padding-left: 3px; }
.row--part { padding-left: 15px; }
.name { width: 36px; }
.row--group { padding-left: 2px; font-weight: 500; }
.row--mate { gap: 2px; padding-left: 13px; color: #999; }
.row--mate .chev { margin-right: 4px; color: #222; }
.row--active { background: #aad8ec; color: #8b4a7b; font-weight: 500; }

/* Model view */
.viewport { position: relative; flex: 1; min-width: 0; overflow: hidden; background: #fefefe; }
.scene { width: 100%; height: 100%; }

.dialog {
  position: absolute;
  top: 2px;
  left: 0;
  width: 192px;
  background: rgba(255, 255, 255, .93);
  box-shadow: 0 1px 3px rgba(0, 0, 0, .4);
  color: #555;
}
.dialog-head { display: flex; align-items: center; height: 17px; padding: 0 4px; border-bottom: 1px solid #ddd; }
.dialog-head h2 { flex: 1; margin: 0; color: #9c1536; font-size: 8px; font-weight: 700; }
.ok { display: grid; place-items: center; width: 16px; height: 16px; background: #15a01a; }
.cancel { padding: 0 0 0 4px; }
.type { display: flex; align-items: center; height: 16px; margin-right: 15px; padding: 0 4px; border-bottom: 1px solid #ccc; }
.type select { flex: 1; appearance: none; color: #222; }
.mates {
  display: block;
  width: 188px;
  height: 16px;
  margin: 4px 2px 3px;
  padding: 1px 3px 0;
  border: 1px solid #4c7eae;
  background: #d5edfa;
  font-size: 7px;
}
.mates::placeholder { color: #555; opacity: 1; }
.check { display: flex; align-items: center; gap: 2px; height: 16px; padding-left: 3px; }
.check input { appearance: none; width: 7px; height: 7px; border: 1px solid #888; border-radius: 1px; background: #fff; }
.dialog-foot { display: flex; align-items: center; gap: 4px; height: 18px; padding: 0 2px; }
.solve { height: 14px; padding: 0 5px; border: 1px solid #aaa; border-radius: 2px; background: #fff; color: #333; }
.info { margin-left: auto; }

.list-toggle {
  position: absolute;
  top: 276px;
  left: 0;
  display: grid;
  place-items: center;
  width: 18px;
  height: 19px;
  background: #fff;
}

.viewcube { position: absolute; top: 6px; right: 9px; width: 88px; }
.cube { width: 88px; height: 96px; }
.shade { position: absolute; right: 2px; bottom: 3px; display: flex; align-items: center; gap: 4px; }

.panel-tabs {
  position: absolute;
  top: 226px;
  right: 0;
  display: grid;
  grid-auto-rows: 1fr;
  min-height: 119px;
  border: 1px solid #aaa;
  border-right: 0;
  background: #fff;
}
.panel-tabs button { display: grid; place-items: center; width: 18px; }
.panel-tabs button + button { border-top: 1px solid #bbb; }
.gauge { position: absolute; right: 6px; bottom: 1px; }

/* Document tabs */
.tabs { display: flex; flex: none; height: 18px; border-bottom: 1px solid #ddd; background: #cfcfcf; }
.tab-add { display: grid; place-items: center; width: 22px; }
.tab { display: flex; align-items: center; gap: 1px; width: 121px; padding-left: 7px; background: #dedede; color: #555; font-size: 9px; }
.tab--active { border-bottom: 2px solid #173f98; background: #fff; color: #333; }
```
